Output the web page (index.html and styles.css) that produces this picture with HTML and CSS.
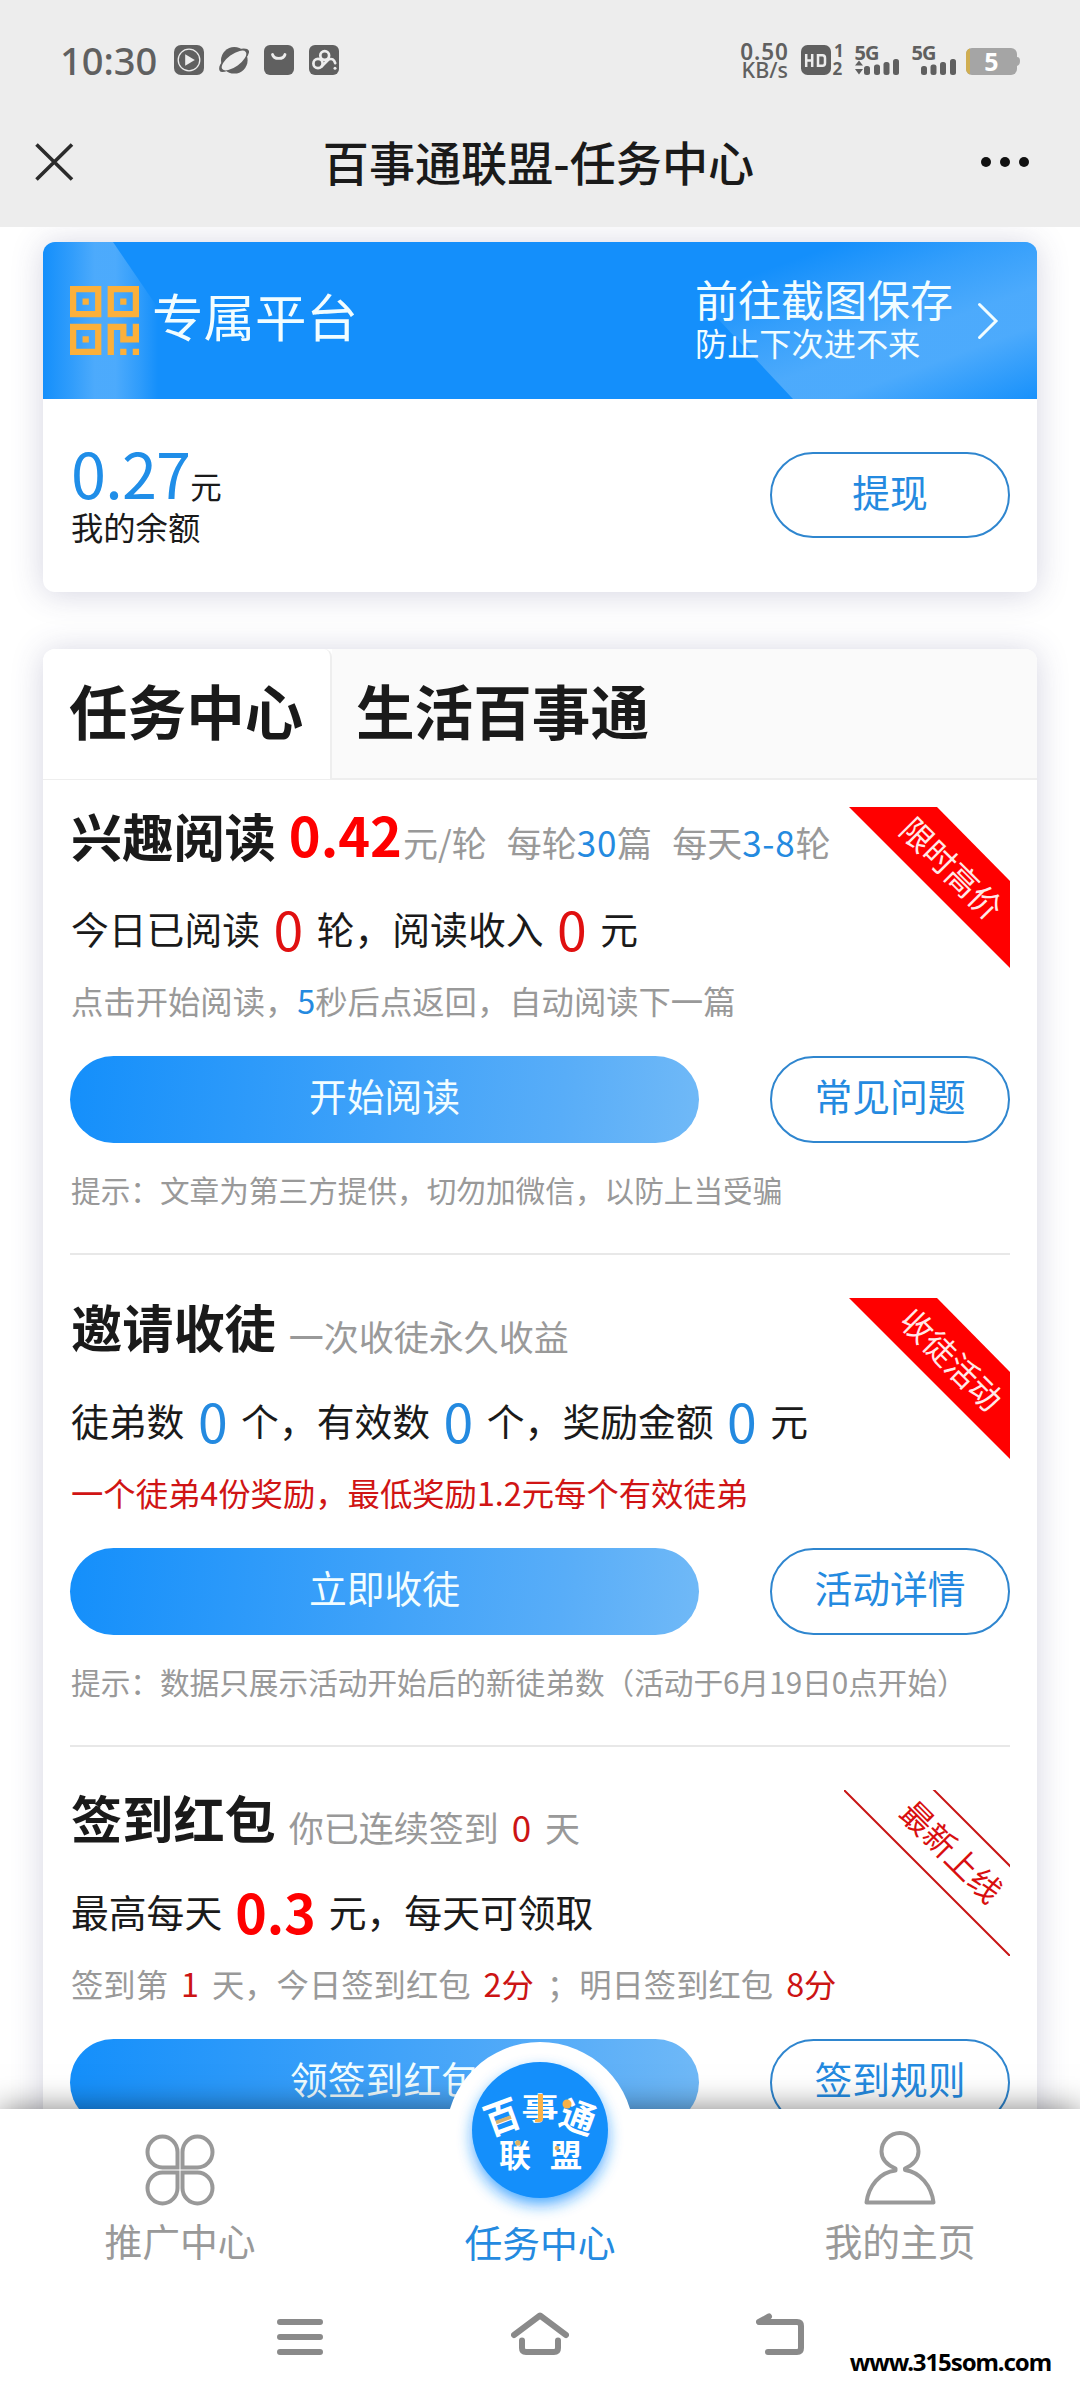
FILE: index.html
```
<!DOCTYPE html>
<html lang="zh-CN">
<head>
<meta charset="utf-8">
<title>百事通联盟-任务中心</title>
<link rel="stylesheet" href="styles.css">
</head>
<body>
<div class="phone">
  <header class="top">
    <div class="status">
      <span class="clock">10:30</span>
      <div class="status-apps">
        <svg width="30" height="30" viewBox="0 0 30 30"><rect width="30" height="30" rx="7" fill="#606060"/><circle cx="15" cy="15" r="10.8" fill="none" stroke="#ededed" stroke-width="1.3"/><path d="M11.2 9.2L20.8 15L11.2 20.8Z" fill="#ededed"/></svg>
        <svg width="30" height="30" viewBox="0 0 30 30"><circle cx="15.3" cy="15.3" r="13.3" fill="#606060"/><path d="M20.500 4Q28.500 2.500 30 6Q30.500 9.500 26 14ZM9 25.500Q2 28.500 .500 25.500Q-1 21 4 16Z" fill="#606060"/><ellipse cx="15" cy="15.500" rx="14.500" ry="6.200" transform="rotate(-36 15 15.500)" fill="#ededed"/></svg>
        <svg width="30" height="30" viewBox="0 0 30 30"><rect width="30" height="30" rx="6" fill="#606060"/><path d="M8.500 9.500A6.400 5 0 0 0 21 9.500" fill="none" stroke="#ededed" stroke-width="2.800" stroke-linecap="round"/></svg>
        <svg width="30" height="30" viewBox="0 0 30 30"><rect width="30" height="30" rx="6" fill="#606060"/><g fill="none" stroke="#ededed" stroke-width="2.700" stroke-linecap="round"><circle cx="9" cy="18.500" r="4.600"/><circle cx="15.700" cy="10.500" r="4.400"/><path d="M12.500 21.500L19.500 14.500Q24.500 12.500 26.200 18.200"/></g><circle cx="26" cy="23.200" r="1.500" fill="#ededed"/></svg>
      </div>
      <div class="status-right">
        <div class="speed"><span>0.50</span><span>KB/s</span></div>
        <svg class="net" width="220" height="34" viewBox="0 0 220 34">
          <g fill="#606060">
            <rect x="1" y="2" width="30" height="30" rx="6.500"/>
            <rect x="64" y="23" width="6" height="9" rx="2.500"/><rect x="74" y="21.500" width="6" height="10.500" rx="2.500"/><rect x="83.500" y="19" width="6" height="13" rx="2.500"/><rect x="93" y="16" width="6" height="16" rx="2.500"/>
            <path d="M55 22.500L59 17.500L63 22.500ZM55 26L59 31.500L63 26Z"/>
            <rect x="121" y="23" width="6" height="9" rx="2.500"/><rect x="130.500" y="21.500" width="6" height="10.500" rx="2.500"/><rect x="140" y="19" width="6" height="13" rx="2.500"/><rect x="150" y="16" width="6" height="16" rx="2.500"/>
          </g>
          <path d="M6.200 11V24M12.200 11V24M6.200 17.500H12.200M18 12.200H22.500Q25 12.200 25 15V20Q25 22.800 22.500 22.800H18Z" fill="none" stroke="#ededed" stroke-width="2.500"/>
          <text class="sim" x="34" y="14">1</text><text class="sim" x="32.500" y="31.500">2</text>
          <text class="gen" x="54.500" y="17">5G</text><text class="gen" x="111.500" y="17">5G</text>
          <rect x="166" y="5" width="51" height="27" rx="6" fill="#a5a5a5"/><path d="M217 14Q220 14 220 18T217 23Z" fill="#a5a5a5"/>
          <path d="M170 5.600V31.400Q166 30 166 26V11Q166 7 170 5.600Z" fill="#d0ae52"/>
          <text class="charge" x="191.500" y="27.500">5</text>
        </svg>
      </div>
    </div>
    <div class="titlebar">
      <svg width="40" height="40" viewBox="0 0 40 40"><path d="M2.500 2.500L38 37.500M38 2.500L2.500 37.500" stroke="#2b2b2b" stroke-width="3.600"/></svg>
      <h1>百事通联盟-任务中心</h1>
      <svg width="50" height="12" viewBox="0 0 50 12" fill="#111"><circle cx="6" cy="6" r="5"/><circle cx="25" cy="6" r="5"/><circle cx="44" cy="6" r="5"/></svg>
    </div>
  </header>

  <main class="content">
    <section class="card">
      <div class="banner">
        <svg class="banner-glow" width="994" height="157" viewBox="0 0 994 157">
          <defs>
            <linearGradient id="glowLeft"><stop offset="0" stop-color="#54aefc" stop-opacity="0"/><stop offset=".25" stop-color="#54aefc" stop-opacity=".45"/><stop offset=".45" stop-color="#54aefc" stop-opacity=".88"/><stop offset=".63" stop-color="#54aefc" stop-opacity=".88"/><stop offset=".85" stop-color="#54aefc" stop-opacity=".4"/><stop offset="1" stop-color="#54aefc" stop-opacity="0"/></linearGradient>
            <linearGradient id="glowRight" gradientUnits="userSpaceOnUse" x1="93" y1="257" x2="168" y2="463"><stop offset="0" stop-color="#54aefc" stop-opacity="0"/><stop offset=".25" stop-color="#54aefc" stop-opacity=".5"/><stop offset=".5" stop-color="#54aefc" stop-opacity=".88"/><stop offset=".66" stop-color="#54aefc" stop-opacity=".88"/><stop offset="1" stop-color="#54aefc" stop-opacity="0"/></linearGradient>
          </defs>
          <path d="M0 0H70L115 66V157H0Z" fill="url(#glowLeft)"/>
          <path d="M603 0H994V157H750Z" fill="url(#glowRight)"/>
        </svg>
        <svg class="qr" width="69" height="69" viewBox="0 0 11 11" fill="#fbb03b"><path fill-rule="evenodd" d="M0 0H5V5H0ZM1 1V4H4V1ZM2 2H3V3H2ZM6 0H11V5H6ZM7 1V4H10V1ZM8 2H9V3H8ZM0 6H5V11H0ZM1 7V10H4V7ZM2 8H3V9H2ZM6 6H9V8H10V6H11V9H8V7H7V11H6ZM8 10H9V11H8ZM10 10H11V11H10Z"/></svg>
        <strong class="banner-name">专属平台</strong>
        <div class="banner-note"><span class="note-main">前往截图保存</span><span class="note-sub">防止下次进不来</span></div>
        <svg width="22" height="38" viewBox="0 0 22 38"><path d="M2.500 2.500L19 19L2.500 35.500" fill="none" stroke="#f2fdff" stroke-width="3" stroke-linecap="round"/></svg>
      </div>
      <div class="wallet">
        <div class="balance">
          <div class="amount"><b>0.27</b><span>元</span></div>
          <div class="amount-label">我的余额</div>
        </div>
        <a class="btn btn-line">提现</a>
      </div>
    </section>

    <section class="card tasks">
      <nav class="tabs"><span class="tab tab-on">任务中心</span><span class="tab">生活百事通</span></nav>

      <article class="task">
        <svg class="ribbon" width="166" height="166" viewBox="0 0 166 166"><path d="M5 0H93L166 74V161Z" fill="#f00"/><text class="ribbon-text" transform="translate(107 62) rotate(45)" y="11.500" fill="#ffe9e9">限时高价</text></svg>
        <div class="head"><h2>兴趣阅读</h2><b class="price">0.42</b><p class="sub">元/轮<i></i>每轮<em class="blue">30</em>篇<i></i>每天<em class="blue">3-8</em>轮</p></div>
        <div class="stats">今日已阅读<b class="red">0</b>轮，阅读收入<b class="red">0</b>元</div>
        <p class="desc">点击开始阅读，<em class="blue">5</em>秒后点返回，自动阅读下一篇</p>
        <div class="actions"><a class="btn btn-fill">开始阅读</a><a class="btn btn-line">常见问题</a></div>
        <p class="hint">提示：文章为第三方提供，切勿加微信，以防上当受骗</p>
      </article>

      <article class="task">
        <svg class="ribbon" width="166" height="166" viewBox="0 0 166 166"><path d="M5 0H93L166 74V161Z" fill="#f00"/><text class="ribbon-text" transform="translate(107 62) rotate(45)" y="11.500" fill="#ffe9e9">收徒活动</text></svg>
        <div class="head"><h2>邀请收徒</h2><p class="sub sub-low">一次收徒永久收益</p></div>
        <div class="stats">徒弟数<b class="blue">0</b>个，有效数<b class="blue">0</b>个，奖励金额<b class="blue">0</b>元</div>
        <p class="desc desc-red">一个徒弟4份奖励，最低奖励1.2元每个有效徒弟</p>
        <div class="actions"><a class="btn btn-fill">立即收徒</a><a class="btn btn-line">活动详情</a></div>
        <p class="hint">提示：数据只展示活动开始后的新徒弟数（活动于6月19日0点开始）</p>
      </article>

      <article class="task">
        <svg class="ribbon" width="166" height="166" viewBox="0 0 166 166"><path d="M-2 -2L170 170M88 -2L168 78" stroke="#c81616" stroke-width="2"/><text class="ribbon-text" transform="translate(107 62) rotate(45)" y="11.500" fill="#d80f0f">最新上线</text></svg>
        <div class="head"><h2>签到红包</h2><p class="sub sub-low">你已连续签到<em class="num">0</em>天</p></div>
        <div class="stats">最高每天<b class="hot">0.3</b>元，每天可领取</div>
        <p class="desc">签到第<em class="num">1</em>天，今日签到红包<em class="num">2分</em>；明日签到红包<em class="num">8分</em></p>
        <div class="actions"><a class="btn btn-fill">领签到红包</a><a class="btn btn-line">签到规则</a></div>
      </article>
    </section>
  </main>

  <footer class="bottom">
    <nav class="tabbar">
      <a class="tabbar-item">
        <svg width="72" height="72" viewBox="0 0 72 72" fill="none" stroke="#999" stroke-width="4"><path d="M33.500 33.500H18.500A15 15.500 0 1 1 33.500 18Z"/><path d="M38.500 33.500H53.500A15 15.500 0 1 0 38.500 18Z"/><path d="M33.500 38.500H18.500A15 15.500 0 1 0 33.500 54Z"/><path d="M38.500 38.500H53.500A15 15.500 0 1 1 38.500 54Z"/></svg>
        <span>推广中心</span>
      </a>
      <a class="tabbar-item tabbar-on">
        <svg class="badge" width="188" height="188" viewBox="0 0 188 188">
          <defs><filter id="halo" x="-30%" y="-30%" width="160%" height="160%"><feGaussianBlur stdDeviation="8"/></filter></defs>
          <circle cx="94" cy="94" r="94" fill="#fff"/>
          <circle cx="94" cy="95" r="67" fill="#1690ff" opacity=".8" filter="url(#halo)"/>
          <circle cx="94" cy="88" r="68" fill="#148ffb"/>
          <g class="logo-text">
            <text transform="translate(56 75) rotate(-20) scale(1 1.08)" y="13">百</text>
            <text transform="translate(94 66) scale(1.06 .84)" y="13">事</text>
            <text transform="translate(132 75) rotate(20) scale(1 1.04)" y="13">通</text>
            <text class="logo-small" x="69" y="125">联</text>
            <text class="logo-small" x="120" y="125">盟</text>
          </g>
          <path d="M92 52H97V77Q97 81 89 80V77H92Z" fill="#f8b147"/>
          <path d="M50 80.500L65 75" stroke="#d9b16c" stroke-width="3.500"/>
          <circle cx="121" cy="62" r="4.500" fill="#f8b147"/><circle cx="72" cy="101" r="2.800" fill="#e0b060"/><circle cx="111" cy="106" r="2.300" fill="#e0b060"/>
        </svg>
        <span>任务中心</span>
      </a>
      <a class="tabbar-item">
        <svg width="72" height="76" viewBox="0 0 72 76" fill="none" stroke="#999" stroke-width="4" stroke-linecap="round" stroke-linejoin="round"><path d="M31.500 40.500V38.500C21 34 17.500 27 17.500 21.500A18.500 18.500 0 0 1 54.500 21.500C54.500 27 51 34 41 38.500V40C56 42 67.500 56 69.500 72.500H2.500C4.500 56 16 42 31.500 40.500"/></svg>
        <span>我的主页</span>
      </a>
    </nav>
    <div class="sysnav">
      <svg width="46" height="44" viewBox="0 0 46 44" fill="none" stroke="#8a8a8a" stroke-width="6" stroke-linecap="round"><path d="M3 10H43M3 25H43M3 40H43"/></svg>
      <svg width="58" height="44" viewBox="0 0 58 44" fill="none" stroke="#8a8a8a" stroke-width="6" stroke-linecap="round" stroke-linejoin="round"><path d="M3 23L29 3.500L55 23M11 28.500V36Q11 40 15 40H43Q47 40 47 36V28.500"/></svg>
      <svg width="48" height="44" viewBox="0 0 48 44" fill="none" stroke="#8a8a8a" stroke-width="6" stroke-linecap="round" stroke-linejoin="round"><path d="M13 4.500L3 10H41Q45 10 45 14V36Q45 40 41 40H12"/></svg>
    </div>
    <span class="mark">www.315som.com</span>
  </footer>
</div>
</body>
</html>
```
FILE: styles.css
```
* { box-sizing: border-box; }
body { margin: 0; background: #fff; }
h1, h2, p { margin: 0; font-weight: inherit; font-size: inherit; }
b, strong, em, i { font-weight: inherit; font-style: normal; }
svg { display: block; flex: none; }

.phone {
  width: 1080px;
  height: 2400px;
  overflow: hidden;
  display: flex;
  flex-direction: column;
  background: #fff;
  color: #1a1a1a;
  font-family: "Noto Sans CJK SC", sans-serif;
  white-space: nowrap;
}

.top { height: 227px; flex: none; background: #ededed; }
.status { height: 84px; padding: 36px 60px 0 60px; display: flex; align-items: center; color: #606060; }
.clock { width: 114px; font: 500 38px/48px "Noto Sans", sans-serif; }
.status-apps { display: flex; gap: 15px; }
.status-right { margin-left: auto; display: flex; align-items: center; gap: 12px; }
.speed { display: flex; flex-direction: column; align-items: flex-end; font: 600 22.500px/19px "Noto Sans", sans-serif; }
.speed span:first-child { letter-spacing: 1px; margin-right: -1px; }
.speed span:last-child { font-size: 21.500px; font-weight: 500; line-height: 18px; }
.net { overflow: visible; }
.sim { font: 700 17px "Noto Sans", sans-serif; fill: #606060; }
.gen { font: 700 20px "Noto Sans", sans-serif; fill: #606060; letter-spacing: -1px; }
.charge { font: 700 25px "Noto Sans", sans-serif; fill: #fff; text-anchor: middle; }

.titlebar { height: 155px; padding: 0 50px 0 34px; display: flex; align-items: center; justify-content: space-between; }
.titlebar h1 { font-size: 46.100px; font-weight: 500; line-height: 60px; margin-left: 23px; padding-bottom: 2px; }

.content { flex: 1; min-height: 0; overflow: hidden; padding: 15px 43px 0; }
.card { border-radius: 12px; background: #fff; box-shadow: 0 2px 32px rgba(60, 60, 120, .22); }
.banner {
  height: 157px;
  padding: 0 38px 0 27px;
  display: flex;
  align-items: center;
  position: relative;
  overflow: hidden;
  border-radius: 12px 12px 0 0;
  background: #148ffb;
  color: #f2fdff;
}
.banner-glow { position: absolute; inset: 0; }
.qr, .banner-name, .banner-note, .banner > svg:last-child { position: relative; }
.banner-name { margin-left: 13px; font-size: 51.500px; line-height: 64px; padding-bottom: 12px; }
.banner-note { margin-left: auto; width: 282px; display: flex; flex-direction: column; padding-bottom: 4px; }
.note-main { font-size: 43px; line-height: 47px; }
.note-sub { font-size: 32.200px; line-height: 41px; }

.wallet { height: 193px; padding: 43px 27px 0; display: flex; justify-content: space-between; }
.balance { margin-top: -4px; padding-left: 1px; }
.amount { display: flex; align-items: baseline; height: 68px; line-height: 68px; }
.amount b { font-size: 63px; color: #208ee8; letter-spacing: -.8px; }
.amount span { font-size: 31.500px; line-height: 40px; }
.amount-label { font-size: 32.300px; line-height: 40px; }
.wallet .btn { margin-top: 10px; height: 86px; }

.btn { height: 87px; border-radius: 44px; font-size: 37.800px; text-align: center; }
.btn-line { width: 240px; border: 2px solid #2f86cf; color: #248ae0; line-height: 73px; background: #fff; }
.btn-fill { width: 629px; color: #f2fdff; line-height: 78px; background: linear-gradient(95deg, #148ffb, #58adf8 78%, #70b9f7); }

.tasks { margin-top: 57px; height: 1700px; }
.tabs { height: 131px; display: flex; border-radius: 12px 12px 0 0; overflow: hidden; }
.tab { flex: 1; padding: 30px 24px 0; font-size: 58.600px; font-weight: 700; line-height: 62px; background: #fafafa; border-bottom: 2px solid #eee; }
.tab-on { flex: none; width: 289px; padding-left: 26px; padding-right: 0; background: #fff; border-right: 2px solid #eee; border-bottom-width: 1px; border-top-right-radius: 8px; }

.task { margin: 0 27px; padding-top: 40.500px; border-bottom: 2px solid #e8e8e8; position: relative; }
.tabs + .task { padding-top: 24px; }
.head, .stats, .desc, .hint { padding-left: 1px; }
.ribbon { position: absolute; right: 0; top: 43px; overflow: hidden; }
.tabs + .task .ribbon { top: 27px; }
.ribbon-text { font-size: 32px; text-anchor: middle; }

.head { height: 60px; line-height: 60px; display: flex; align-items: baseline; }
h2 { font-size: 51.200px; font-weight: 700; margin-right: 13px; }
.price { font-size: 54px; font-weight: 700; color: #fe0000; margin-right: 1px; }
.sub { font-size: 35px; color: #999; }
.sub i { display: inline-block; width: 20px; }
.sub em { letter-spacing: .8px; }
.sub-low { transform: translateY(3px); }
.stats { margin-top: 34px; height: 60px; line-height: 60px; display: flex; align-items: center; font-size: 37.800px; }
.stats b { font-size: 53.500px; margin: 0 13.500px; }
.stats .hot { color: #fe0000; font-weight: 700; margin: 0 13px; }
.stats .red { color: #e01010; }
.blue { color: #248ae0; }
.desc { margin-top: 22px; height: 40px; line-height: 40px; font-size: 32.350px; color: #999; }
.desc-red { color: #d01414; }
.num { color: #cc1414; margin: 0 13px; }
.actions { margin-top: 36px; display: flex; justify-content: space-between; }
.hint { margin: 27px 0 43px; height: 40px; line-height: 40px; font-size: 29.650px; color: #999; }

.bottom { position: relative; height: 291px; flex: none; background: #fff; box-shadow: 0 0 30px rgba(0, 0, 0, .5); }
.tabbar { height: 173px; display: grid; grid-template-columns: repeat(3, 1fr); }
.tabbar-item { position: relative; display: flex; flex-direction: column; align-items: center; justify-content: flex-end; font-size: 37.800px; line-height: 56px; color: #999; padding-bottom: 14px; }
.tabbar-item > svg:not(.badge) { margin-bottom: 6px; }
.tabbar-on { color: #248ae0; padding-bottom: 13px; }
.badge { position: absolute; left: 86px; top: -67px; }
.logo-text { fill: #fff; font-size: 35px; font-weight: 700; text-anchor: middle; }
.logo-small { font-size: 32px; }
.sysnav { height: 44px; margin-top: 30px; padding: 0 276px 0 277px; display: flex; justify-content: space-between; }
.mark { position: absolute; right: 29px; bottom: 22px; font: 700 24px/32px "Noto Sans", sans-serif; letter-spacing: -1.100px; color: #000; }
```
